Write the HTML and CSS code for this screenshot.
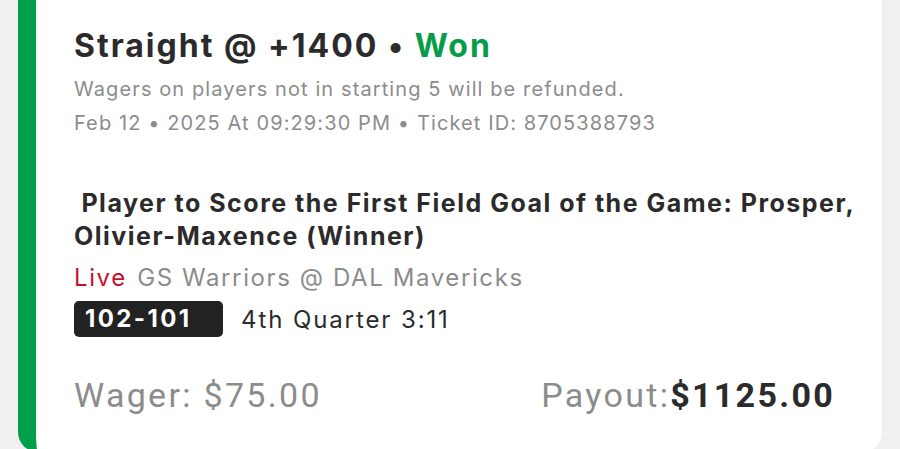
FILE: index.html
```html
<!DOCTYPE html>
<html>
<head>
<meta charset="utf-8">
<link rel="stylesheet" href="styles.css">
</head>
<body>
<div class="card">
  <div class="head">
    <div class="title">Straight @ +1400 • <span class="won">Won</span></div>
    <div class="note first">Wagers on players not in starting 5 will be refunded.</div>
    <div class="note">Feb 12 • 2025 At 09:29:30 PM • Ticket ID: 8705388793</div>
  </div>
  <div class="market">&nbsp;Player to Score the First Field Goal of the Game: Prosper, <span class="nowrap">Olivier-Maxence (Winner)</span></div>
  <div class="event"><span class="live">Live</span> GS Warriors @ DAL Mavericks</div>
  <div class="score-row">
    <span class="score">102-101</span>
    <span class="period">4th Quarter 3:11</span>
  </div>
  <div class="totals">
    <span class="wager">Wager: $75.00</span>
    <span class="payout">Payout:<b>$1125.00</b></span>
  </div>
</div>
</body>
</html>
```
FILE: styles.css
```css
html, body {
  margin: 0;
  padding: 0;
  background: #f0f0f0;
  width: 900px;
  height: 449px;
  overflow: hidden;
}
.card {
  margin-left: 18px;
  width: 864px;
  height: 452px;
  box-sizing: border-box;
  background: #fff;
  border-left: 18px solid #00a04b;
  border-radius: 0 0 20px 20px;
  padding: 25px 47px 0 38px;
  font-family: Inter, "Noto Sans", sans-serif;
  color: #2b2b2b;
  display: flex;
  flex-direction: column;
}
.title {
  font-size: 32px;
  font-weight: 700;
  line-height: 42px;
  letter-spacing: 2px;
}
.won { color: #079c49; }
.note {
  font-size: 20px;
  line-height: 34px;
  color: #8c8c8c;
  letter-spacing: 1.1px;
}
.note.first { margin-top: 5px; }
.market {
  margin-top: 47px;
  margin-right: -20px;
  font-size: 25px;
  font-weight: 700;
  line-height: 33px;
  letter-spacing: 1.5px;
}
.nowrap { white-space: nowrap; }
.event {
  margin-top: 5px;
  font-size: 24px;
  line-height: 40px;
  color: #8c8c8c;
  letter-spacing: 1.6px;
}
.live { color: #c8102e; margin-right: 2px; }
.score-row {
  margin-top: 3px;
  display: flex;
  align-items: center;
  gap: 18px;
}
.score {
  background: #222;
  color: #fff;
  font-weight: 700;
  font-size: 24px;
  letter-spacing: 2.4px;
  width: 149px;
  height: 36px;
  box-sizing: border-box;
  padding-left: 11px;
  line-height: 36px;
  border-radius: 5px;
}
.period {
  font-size: 24px;
  color: #2b2b2b;
  letter-spacing: 1.9px;
}
.totals {
  margin-top: 38px;
  display: flex;
  justify-content: space-between;
  align-items: baseline;
  font-family: Roboto, "Liberation Sans", sans-serif;
  font-size: 34px;
  letter-spacing: 2.3px;
  color: #8c8c8c;
}
.payout b {
  color: #2b2b2b;
  font-weight: 700;
}
```
